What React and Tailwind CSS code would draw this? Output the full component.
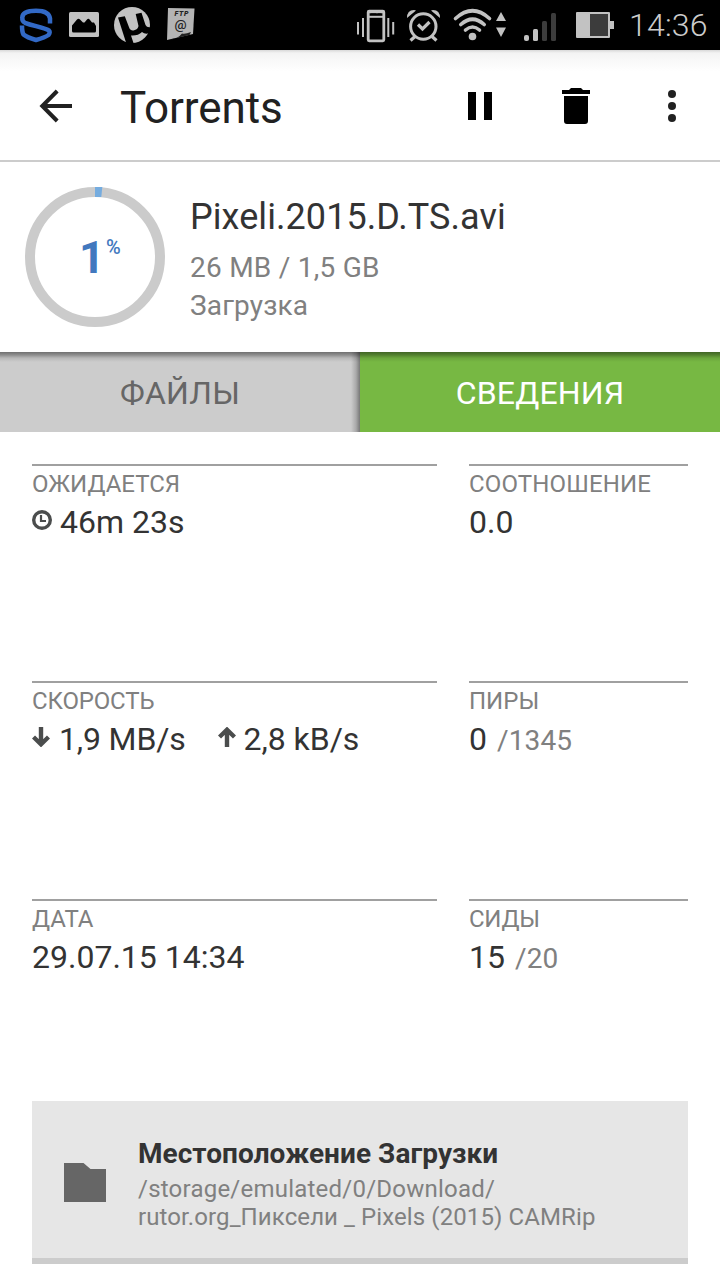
const ROBOTO = "font-['Roboto','Liberation_Sans',sans-serif]";

function StatusBar() {
  return (
    <div className="flex h-[50px] w-full shrink-0 items-center bg-black">
      <svg width="340" height="50" viewBox="0 0 340 50" className="shrink-0">
        <path d="M50 23.500V18.500Q49 10.800 36 10.800Q22.500 10.800 22.300 17.500Q22 21.500 25 22.800Q29 24.300 36 26.200Q46 28.800 49 30.500Q50.500 32 48.500 35Q45 37.500 36 40Q27 37.500 23.500 34.500Q22 32 22 25.500" fill="none" stroke="#3269c6" strokeWidth="4.500" />
        <path d="M70.500 12h27a1.500 1.500 0 0 1 1.500 1.500v22a1.500 1.500 0 0 1-1.500 1.500h-27a1.500 1.500 0 0 1-1.500-1.500v-22a1.500 1.500 0 0 1 1.500-1.500z" fill="#c2c2c2" />
        <path d="M72 31V25.500l5-6q1.500-1.500 3 0l3 3h1.500l2.500-3q1.500-1.500 3 .5l2 2.500h2l2 3.500V31q0 1.500-1.500 1.500h-21q-1.500 0-1.500-1.500z" fill="#000" />
        <circle cx="132" cy="25" r="18" fill="#c2c2c2" />
        <path d="M118 17.500L124.800 16.300L129.500 28.500Q131 31 133.500 30.500Q138 29.500 138.500 26L135.700 14L141.500 12.800L145.500 25Q147 28 151 27V32.500Q145.500 35 142 32Q138 36 131 35.500L133.800 44H126.500Z" fill="#000" />
        <path d="M168 8l26.500.5-1.500 25.500-26 6z" fill="#b4b4b4" />
        <path d="M168 40q10-1 14-6.500q3 1 9-1.500l-1.500 3z" fill="#222222" />
        <text x="174.500" y="15.800" fontSize="7" fontWeight="900" fontStyle="italic" fill="#222" fontFamily="Roboto" textLength="14">FTP</text>
        <text x="174.500" y="28.500" fontSize="13.500" fontWeight="500" fill="#222" fontFamily="Roboto">@</text>
      </svg>
      <svg width="284" height="50" viewBox="340 0 284 50" className="shrink-0">
        <g fill="none" stroke="#c2c2c2">
          <rect x="368.200" y="11.200" width="15.600" height="29.600" rx="1" strokeWidth="2.800" />
          <path d="M368 16.800h16" strokeWidth="2" />
          <path d="M369 12h14" strokeWidth="2.500" />
          <path d="M371 14.200h5M378 14.200h3" strokeWidth="1.600" stroke="#000" />
          <path d="M358 22v12.500M363 18v19M388.300 18v19M393.200 22v12.500" strokeWidth="2" />
          <circle cx="423.300" cy="26.500" r="12.700" strokeWidth="3" />
          <path d="M418 24.500l4.500 4.500 7-7" strokeWidth="3.200" />
          <path d="M415 36.500l-4.500 4M432 36.500l4.500 4" strokeWidth="3.200" />
        </g>
        <path d="M407 18q0-8 7-8l2 .5zM440 18q0-8-7-8l-2 .5z" fill="#c2c2c2" />
        <g fill="none" stroke="#c2c2c2" strokeWidth="3.600" strokeLinecap="round">
          <path d="M455.500 18.500q17-15.500 34 0" />
          <path d="M460.800 24.500q11.700-10.500 23.400 0" />
          <path d="M465.500 30q7-6 14 0" />
        </g>
        <circle cx="472.500" cy="36.500" r="3.800" fill="#c2c2c2" />
        <path d="M501 12l5 9h-10zM501 37l5-9.500h-10z" fill="#c2c2c2" />
        <rect x="524" y="35" width="5" height="6" rx="2" fill="#c2c2c2" />
        <rect x="533" y="29" width="5" height="12" rx="1.500" fill="#c2c2c2" />
        <rect x="542" y="21" width="5" height="20" rx="1.500" fill="#3c3c3c" />
        <rect x="551" y="13" width="5" height="28" rx="1.500" fill="#3c3c3c" />
        <path d="M577 12h32a1 1 0 0 1 1 1v8h4v8h-4v8a1 1 0 0 1-1 1h-32a1 1 0 0 1-1-1V13a1 1 0 0 1 1-1z" fill="#c2c2c2" />
        <rect x="590" y="14" width="18" height="22" fill="#3c3c3c" />
      </svg>
      <span className="ml-[5px] text-[32px] font-light leading-[38px] tracking-[0.2px] whitespace-nowrap text-[#cccccc]">14:36</span>
    </div>
  );
}

function Toolbar() {
  return (
    <header className="flex h-[112px] shrink-0 items-center border-b-2 border-[#cccccc] bg-[linear-gradient(#d8d8d8_0px,#f3f3f3_3px,#f8f8f8_10px,#ffffff_22px)]">
      <svg width="112" height="110" viewBox="0 50 112 110" className="shrink-0">
        <path d="M72 106H42.500M57.200 91L42.300 106L57.200 121" fill="none" stroke="#212121" strokeWidth="4" />
      </svg>
      <h1 className="ml-[8px] grow pt-[5px] text-[44px] leading-[50px] tracking-[-0.1px] text-[#212121]">Torrents</h1>
      <svg width="280" height="110" viewBox="440 50 280 110" className="shrink-0">
        <path d="M468 92h8v28h-8zM484 92h8v28h-8z" />
        <path d="M562 90h7l2-2h10l2 2h7v4h-28zM564 96h24v25a3 3 0 0 1-3 3h-18a3 3 0 0 1-3-3z" />
        <g fill="#212121">
          <circle cx="672" cy="94" r="4" />
          <circle cx="672" cy="106" r="4" />
          <circle cx="672" cy="118" r="4" />
        </g>
      </svg>
    </header>
  );
}

function Summary() {
  return (
    <section className="flex h-[190px] shrink-0 pl-[25px]">
      <div className="relative mt-[25px] h-[140px] w-[140px] shrink-0">
        <svg width="140" height="140" viewBox="0 0 140 140">
          <circle cx="70" cy="70" r="65" fill="none" stroke="#cbcbcb" strokeWidth="10" />
          <path d="M70 0H77.300L76.300 10H70z" fill="#75acdf" />
        </svg>
        <div className="absolute top-[44px] left-[54px] flex items-start font-bold text-[#4278be]">
          <span className="w-[27px] text-[45px] leading-[54px]">1</span>
          <span className="mt-[4px] text-[20px] font-medium leading-[24px]">%</span>
        </div>
      </div>
      <div className="ml-[25px] pt-[34px]">
        <h2 className="text-[36px] leading-[42px] tracking-[0.07px] whitespace-nowrap text-[#333333]">Pixeli.2015.D.TS.avi</h2>
        <p className="mt-[13px] text-[28px] leading-[33px] tracking-[0.25px] text-[#808080]">26 MB / 1,5 GB</p>
        <p className="mt-[5px] text-[28px] leading-[33px] tracking-[0.15px] text-[#808080]">Загрузка</p>
      </div>
    </section>
  );
}

function Tabs() {
  return (
    <nav className="relative flex h-[80px] shrink-0 text-[32px] leading-[38px]">
      <div className="flex w-[360px] items-center justify-center bg-[#cccccc] bg-[linear-gradient(to_left,#777777_0px,#aaaaaa_4px,#cccccc_9px)] pt-[2px] tracking-[0.3px] text-[#666666]">
        <span>ФАЙЛЫ</span>
      </div>
      <div className="flex w-[360px] items-center justify-center bg-[#77b843] pt-[2px] tracking-[0.15px] text-white">
        <span>СВЕДЕНИЯ</span>
      </div>
      <div className="absolute inset-x-0 top-0 h-[10px] bg-[linear-gradient(rgba(0,0,0,0.45)_0px,rgba(0,0,0,0.3)_3px,rgba(0,0,0,0.1)_6px,transparent_10px)]" />
    </nav>
  );
}

function Stat({ label, children }) {
  return (
    <div className="border-t-2 border-[#a0a0a0] pt-[4px] whitespace-nowrap">
      <div className="text-[24px] leading-[28px] text-[#808080]">{label}</div>
      <div className="mt-[5px] flex h-[38px] items-baseline text-[32px] leading-[38px] text-[#333333]">{children}</div>
    </div>
  );
}

function Stats() {
  return (
    <section className="grid h-[637px] shrink-0 grid-cols-[405px_219px] grid-rows-[217px_218px_202px] gap-x-[32px] px-[32px]">
      <Stat label="ОЖИДАЕТСЯ">
        <svg width="20" height="20" viewBox="0 0 20 20" className="mt-[7px] mr-[8px] self-start">
          <circle cx="10" cy="10" r="8.300" fill="none" stroke="#4b4d4d" strokeWidth="3.400" />
          <path d="M9 5v6h5" fill="none" stroke="#4b4d4d" strokeWidth="2.200" />
        </svg>
        <span>46m 23s</span>
      </Stat>
      <Stat label={<span className="tracking-[0.15px]">СООТНОШЕНИЕ</span>}>0.0</Stat>
      <Stat label={<span className="tracking-[-0.15px]">СКОРОСТЬ</span>}>
        <svg width="18" height="20" viewBox="0 0 18 20" className="mt-[7px] mr-[9px] self-start">
          <path d="M9 0v16M1.500 10L9 17.300L16.500 10" fill="none" stroke="#4b4d4d" strokeWidth="4.400" />
        </svg>
        <span className="tracking-[-0.15px]">1,9 MB/s</span>
        <svg width="18" height="20" viewBox="0 0 18 20" className="mt-[7px] mr-[8px] ml-[32px] self-start">
          <path d="M9 20V4M1.500 10L9 2.700L16.500 10" fill="none" stroke="#4b4d4d" strokeWidth="4.400" />
        </svg>
        <span className="tracking-[-0.05px]">2,8 kB/s</span>
      </Stat>
      <Stat label="ПИРЫ">
        <span>0</span>
        <span className="ml-[10px] text-[28px] tracking-[0.15px] text-[#808080]">/1345</span>
      </Stat>
      <Stat label="ДАТА">29.07.15 14:34</Stat>
      <Stat label={<span className="tracking-[-0.25px]">СИДЫ</span>}>
        <span>15</span>
        <span className="ml-[10px] text-[28px] tracking-[0.15px] text-[#808080]">/20</span>
      </Stat>
    </section>
  );
}

function LocationCard() {
  return (
    <section className="mx-[32px] flex h-[163px] shrink-0 border-b-[6px] border-[#cccccc] bg-[#e6e6e6] pl-[32px]">
      <svg width="42" height="39" viewBox="0 0 42 39" className="mt-[62px] shrink-0">
        <path d="M0 0H19.500L26.500 6H42V39H0z" fill="#666666" />
      </svg>
      <div className="ml-[32px] pt-[36px] whitespace-nowrap">
        <h3 className="text-[28px] font-bold leading-[33px] tracking-[0.05px] text-[#333333]">Местоположение Загрузки</h3>
        <p className="mt-[5px] text-[24px] leading-[28px] text-[#808080]">
          <span className="tracking-[0.23px]">/storage/emulated/0/Download/</span>
          <br />
          <span className="tracking-[0.1px]">rutor.org_Пиксели _ Pixels (2015) CAMRip</span>
        </p>
      </div>
    </section>
  );
}

export default function App() {
  return (
    <div className={`flex h-[1280px] w-[720px] flex-col overflow-hidden bg-white ${ROBOTO}`}>
      <StatusBar />
      <Toolbar />
      <Summary />
      <Tabs />
      <div className="h-[32px] shrink-0" />
      <Stats />
      <LocationCard />
    </div>
  );
}
